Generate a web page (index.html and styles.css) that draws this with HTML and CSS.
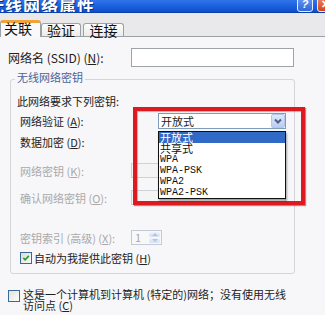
FILE: index.html
```html
<!DOCTYPE html>
<html lang="zh-CN">
<head>
<meta charset="utf-8">
<title>无线网络属性</title>
<link rel="stylesheet" href="styles.css">
</head>
<body>
<div class="win">
  <div class="titlebar">
    <span class="title">无线网络属性</span>
    <span class="caption-btns">
      <span class="cbtn help">?</span>
      <span class="cbtn close">✕</span>
    </span>
  </div>
  <div class="tabstrip">
    <div class="tab active">关联</div>
    <div class="tab">验证</div>
    <div class="tab third">连接</div>
  </div>
  <div class="panel">
    <div class="ssid-row">
      <span class="ssid-label">网络名 (SSID) (<u>N</u>):</span>
      <span class="textbox ssid-box"></span>
    </div>
    <div class="group">
      <div class="legend">无线网络密钥</div>
      <div class="req">此网络要求下列密钥:</div>
      <div class="frow auth">
        <span class="flabel">网络验证 (<u>A</u>):</span>
        <div class="select">
          <span class="sel-text">开放式</span>
          <span class="sel-btn"><svg width="12" height="12" viewBox="0 0 12 12"><path d="M3 4.5 L6 7.5 L9 4.5" fill="none" stroke="#4d6185" stroke-width="2"/></svg></span>
          <ul class="droplist">
            <li class="on">开放式</li>
            <li>共享式</li>
            <li class="lat">WPA</li>
            <li class="lat">WPA-PSK</li>
            <li class="lat">WPA2</li>
            <li class="lat">WPA2-PSK</li>
          </ul>
        </div>
      </div>
      <div class="frow enc"><span class="flabel">数据加密 (<u>D</u>):</span></div>
      <div class="frow key dis"><span class="flabel">网络密钥 (<u>K</u>):</span><span class="textbox dis-box"></span></div>
      <div class="frow key2 dis"><span class="flabel">确认网络密钥 (<u>O</u>):</span><span class="textbox dis-box"></span></div>
      <div class="frow idx dis">
        <span class="flabel">密钥索引 (高级) (<u>X</u>):</span>
        <span class="spinner"><span class="spin-val">1</span><span class="spin-btns"><span class="spin-up"></span><span class="spin-down"></span></span></span>
      </div>
      <div class="frow auto">
        <span class="check"><svg width="12" height="12" viewBox="0 0 12 12"><path d="M2.8 5.8 L5 8.2 L9.4 3.4" fill="none" stroke="#22a322" stroke-width="2"/></svg></span>
        <span class="auto-text">自动为我提供此密钥 (<u>H</u>)</span>
      </div>
    </div>
    <div class="adhoc">
      <span class="check"></span>
      <span class="adhoc-text">这是一个计算机到计算机 (特定的)网络；没有使用无线<br>访问点 (<u>C</u>)</span>
    </div>
  </div>
  <div class="callout"></div>
</div>
</body>
</html>
```

FILE: styles.css
```css
* { box-sizing: border-box; margin: 0; padding: 0; }
html, body { width: 325px; height: 315px; overflow: hidden; }
body {
  background: #f7f7f9;
  font: 11px/12px "Noto Sans CJK SC", "Noto Sans", sans-serif;
  color: #222;
}
.win { position: relative; width: 325px; height: 315px; overflow: hidden; background: #f7f7f9; }

/* title bar */
.titlebar {
  height: 13px;
  display: flex;
  justify-content: space-between;
  align-items: flex-end;
  overflow: hidden;
  background: linear-gradient(#2f74ea, #1a60dc 55%, #0d4fcb);
  border-bottom: 1px solid #0a3ea8;
}
.title {
  margin-left: -13px;
  margin-bottom: -2px;
  font-size: 17px;
  line-height: 17px;
  font-weight: bold;
  letter-spacing: 1px;
  color: #fff;
  text-shadow: 1px 1px 0 #0b2f86;
  white-space: nowrap;
}
.caption-btns { display: flex; gap: 4px; margin-right: -8px; }
.cbtn {
  width: 16px; height: 16px;
  border: 1px solid #e8eefc;
  border-radius: 3px;
  color: #fff;
  font: bold 11px/14px "Liberation Sans", sans-serif;
  text-align: center;
}
.help { background: linear-gradient(#6d9cf2, #2f67da); font-style: italic; }
.close { background: linear-gradient(#ee8a6a, #d4421c); }

/* tabs */
.tabstrip {
  height: 23px;
  display: flex;
  align-items: flex-end;
  background: #e9e9ec;
}
.tab {
  width: 40px;
  height: 13px;
  border: 1px solid #9aa2a8;
  border-bottom: none;
  border-radius: 3px 3px 0 0;
  background: linear-gradient(#fdfdfd, #ecebe8);
  font-size: 14px;
  line-height: 12px;
  text-align: center;
  color: #111;
}
.tab.active {
  width: 41px;
  height: 17px;
  margin-bottom: -1px;
  position: relative;
  z-index: 1;
  border-top: 3px solid #f2a23a;
  background: #f9f9fb;
  line-height: 11px;
  padding-right: 5px;
}
.tab.third { margin-left: 2px; width: 41px; }

/* panel */
.panel {
  border-top: 1px solid #9aa2a8;
  background: #f7f7f9;
  padding: 0 8px;
  height: 279px;
}
.ssid-row {
  margin-top: 11px;
  height: 19px;
  display: flex;
  align-items: center;
}
.ssid-label { width: 123px; font-size: 12px; }
.textbox { display: block; background: #fff; border: 1px solid #9ea3a8; }
.ssid-box { width: 163px; height: 19px; }

.group {
  margin: 12px 0 0 2px;
  width: 285px;
  border: 1px solid #d4d4da;
  border-radius: 3px;
  padding: 0 0 9px 6px;
}
.legend {
  width: max-content;
  margin: -9px 0 0 -2px;
  padding: 0 2px;
  height: 12px;
  background: #f7f7f9;
  color: #4a6399;
}
.req { margin-top: 12px; height: 12px; }
.frow { display: flex; align-items: center; padding-left: 3px; }
.flabel { width: 111px; white-space: nowrap; }
.dis { color: #a9a9ab; }

.auth { margin-top: 6px; height: 16px; }
.enc { margin-top: 5px; height: 16px; }
.key { margin-top: 13px; height: 15px; }
.key2 { margin-top: 12px; height: 15px; }
.idx { margin-top: 25px; height: 15px; }
.auto { margin-top: 7px; height: 12px; }

.dis-box { width: 155px; height: 15px; background: #f4f4f4; border-color: #cdd2da; }

.select {
  position: relative;
  margin-left: 27px;
  width: 128px;
  height: 16px;
  display: flex;
  align-items: center;
  border: 1px solid #7f9db9;
  background: #fff;
  color: #222;
}
.sel-text { flex: 1; padding-left: 2px; line-height: 14px; }
.sel-btn {
  width: 14px; height: 14px;
  display: flex; align-items: center; justify-content: center;
  background: linear-gradient(#dfe8fb, #b9cdf3);
  border: 1px solid #b3c6ee;
  border-radius: 2px;
}
.droplist {
  position: absolute;
  left: -1px;
  top: 17px;
  width: 128px;
  list-style: none;
  background: #fff;
  border: 1px solid #111;
  box-shadow: 1px 2px 2px rgba(0,0,0,0.35);
  z-index: 3;
}
.droplist li { height: 11px; line-height: 11px; padding-left: 1px; color: #111; white-space: nowrap; }
.droplist li.on { background: #3169c6; color: #fff; }
.droplist li.lat { font-family: "Liberation Mono", monospace; font-size: 10px; }

.spinner {
  width: 31px; height: 15px;
  display: flex;
  border: 1px solid #c3cad6;
  background: #f8f8f8;
}
.spin-val { flex: 1; padding-left: 3px; line-height: 13px; color: #a9a9ab; }
.spin-btns { width: 12px; display: flex; flex-direction: column; padding: 1px 1px 1px 0; gap: 1px; }
.spin-up, .spin-down {
  flex: 1;
  border-radius: 2px;
  background: linear-gradient(#eef3fc, #d2def3);
  display: flex; align-items: center; justify-content: center;
}
.spin-up::after { content: ""; border: 3px solid transparent; border-bottom-color: #b8c4d8; border-top: 0; }
.spin-down::after { content: ""; border: 3px solid transparent; border-top-color: #b8c4d8; border-bottom: 0; }

.check {
  width: 12px; height: 12px;
  border: 1px solid #3d6a94;
  background: linear-gradient(135deg, #dcdcd6, #fbfbfb);
  display: flex; align-items: center; justify-content: center;
}
.check svg { display: block; }
.auto-text { margin-left: 2px; }

.adhoc { margin-top: 15px; display: flex; align-items: flex-start; }
.adhoc .check { width: 12px; height: 12px; margin-top: 1px; margin-right: 3px; background: linear-gradient(135deg, #e2e2de, #fdfdfd); }
.adhoc-text { line-height: 11px; }

/* annotation box */
.callout {
  position: absolute;
  left: 133px;
  top: 107px;
  width: 172px;
  height: 98px;
  border: 4px solid #dc1a20;
  box-shadow: 1px 1px 1px rgba(80,0,0,0.45), inset 1px 1px 1px rgba(80,0,0,0.3);
  z-index: 2;
}
```
